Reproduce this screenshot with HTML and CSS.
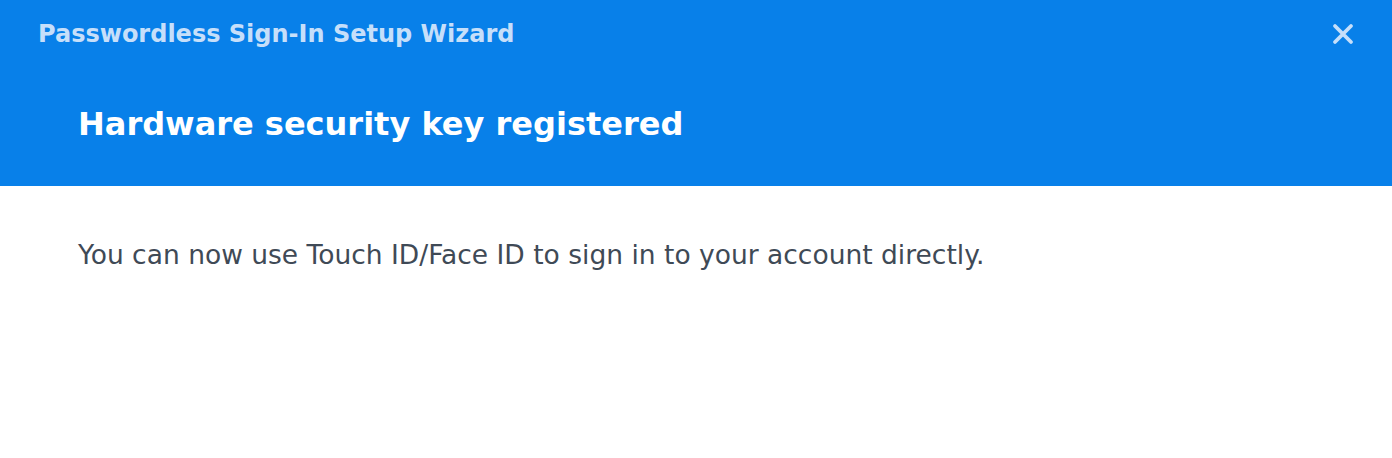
FILE: index.html
```html
<!DOCTYPE html>
<html>
<head>
<meta charset="utf-8">
<link rel="stylesheet" href="styles.css">
</head>
<body>
<div class="dialog">
  <header class="header">
    <div class="topbar">
      <div class="wizard-title">Passwordless Sign-In Setup Wizard</div>
      <button class="close" aria-label="Close">
        <svg width="22" height="22" viewBox="0 0 22 22"><path d="M3 3 L19 19 M19 3 L3 19" stroke="#c6dffa" stroke-width="3.8" stroke-linecap="round"/></svg>
      </button>
    </div>
    <h1 class="step-title">Hardware security key registered</h1>
  </header>
  <main class="content">
    <p class="message">You can now use Touch ID/Face ID to sign in to your account directly.</p>
  </main>
</div>
</body>
</html>
```
FILE: styles.css
```css
html, body { margin: 0; padding: 0; background: #fff; }
.dialog { width: 1392px; height: 458px; font-family: "DejaVu Sans", Verdana, sans-serif; }
.header { background: #0880e9; height: 186px; box-sizing: border-box; padding: 0 0 0 38px; }
.topbar { display: flex; align-items: center; justify-content: space-between; height: 68px; }
.wizard-title { color: #c6dffa; font-weight: bold; font-size: 24px; line-height: 30px; }
.close { background: none; border: 0; padding: 0; margin-right: 38px; width: 22px; height: 22px; display: flex; }
.step-title { margin: 0; padding: 36px 0 0 40px; color: #fff; font-size: 32px; font-weight: bold; line-height: 40px; }
.content { padding: 51px 78px 0; }
.message { margin: 0; color: #3f4a56; font-size: 26.5px; line-height: 36px; }
```
